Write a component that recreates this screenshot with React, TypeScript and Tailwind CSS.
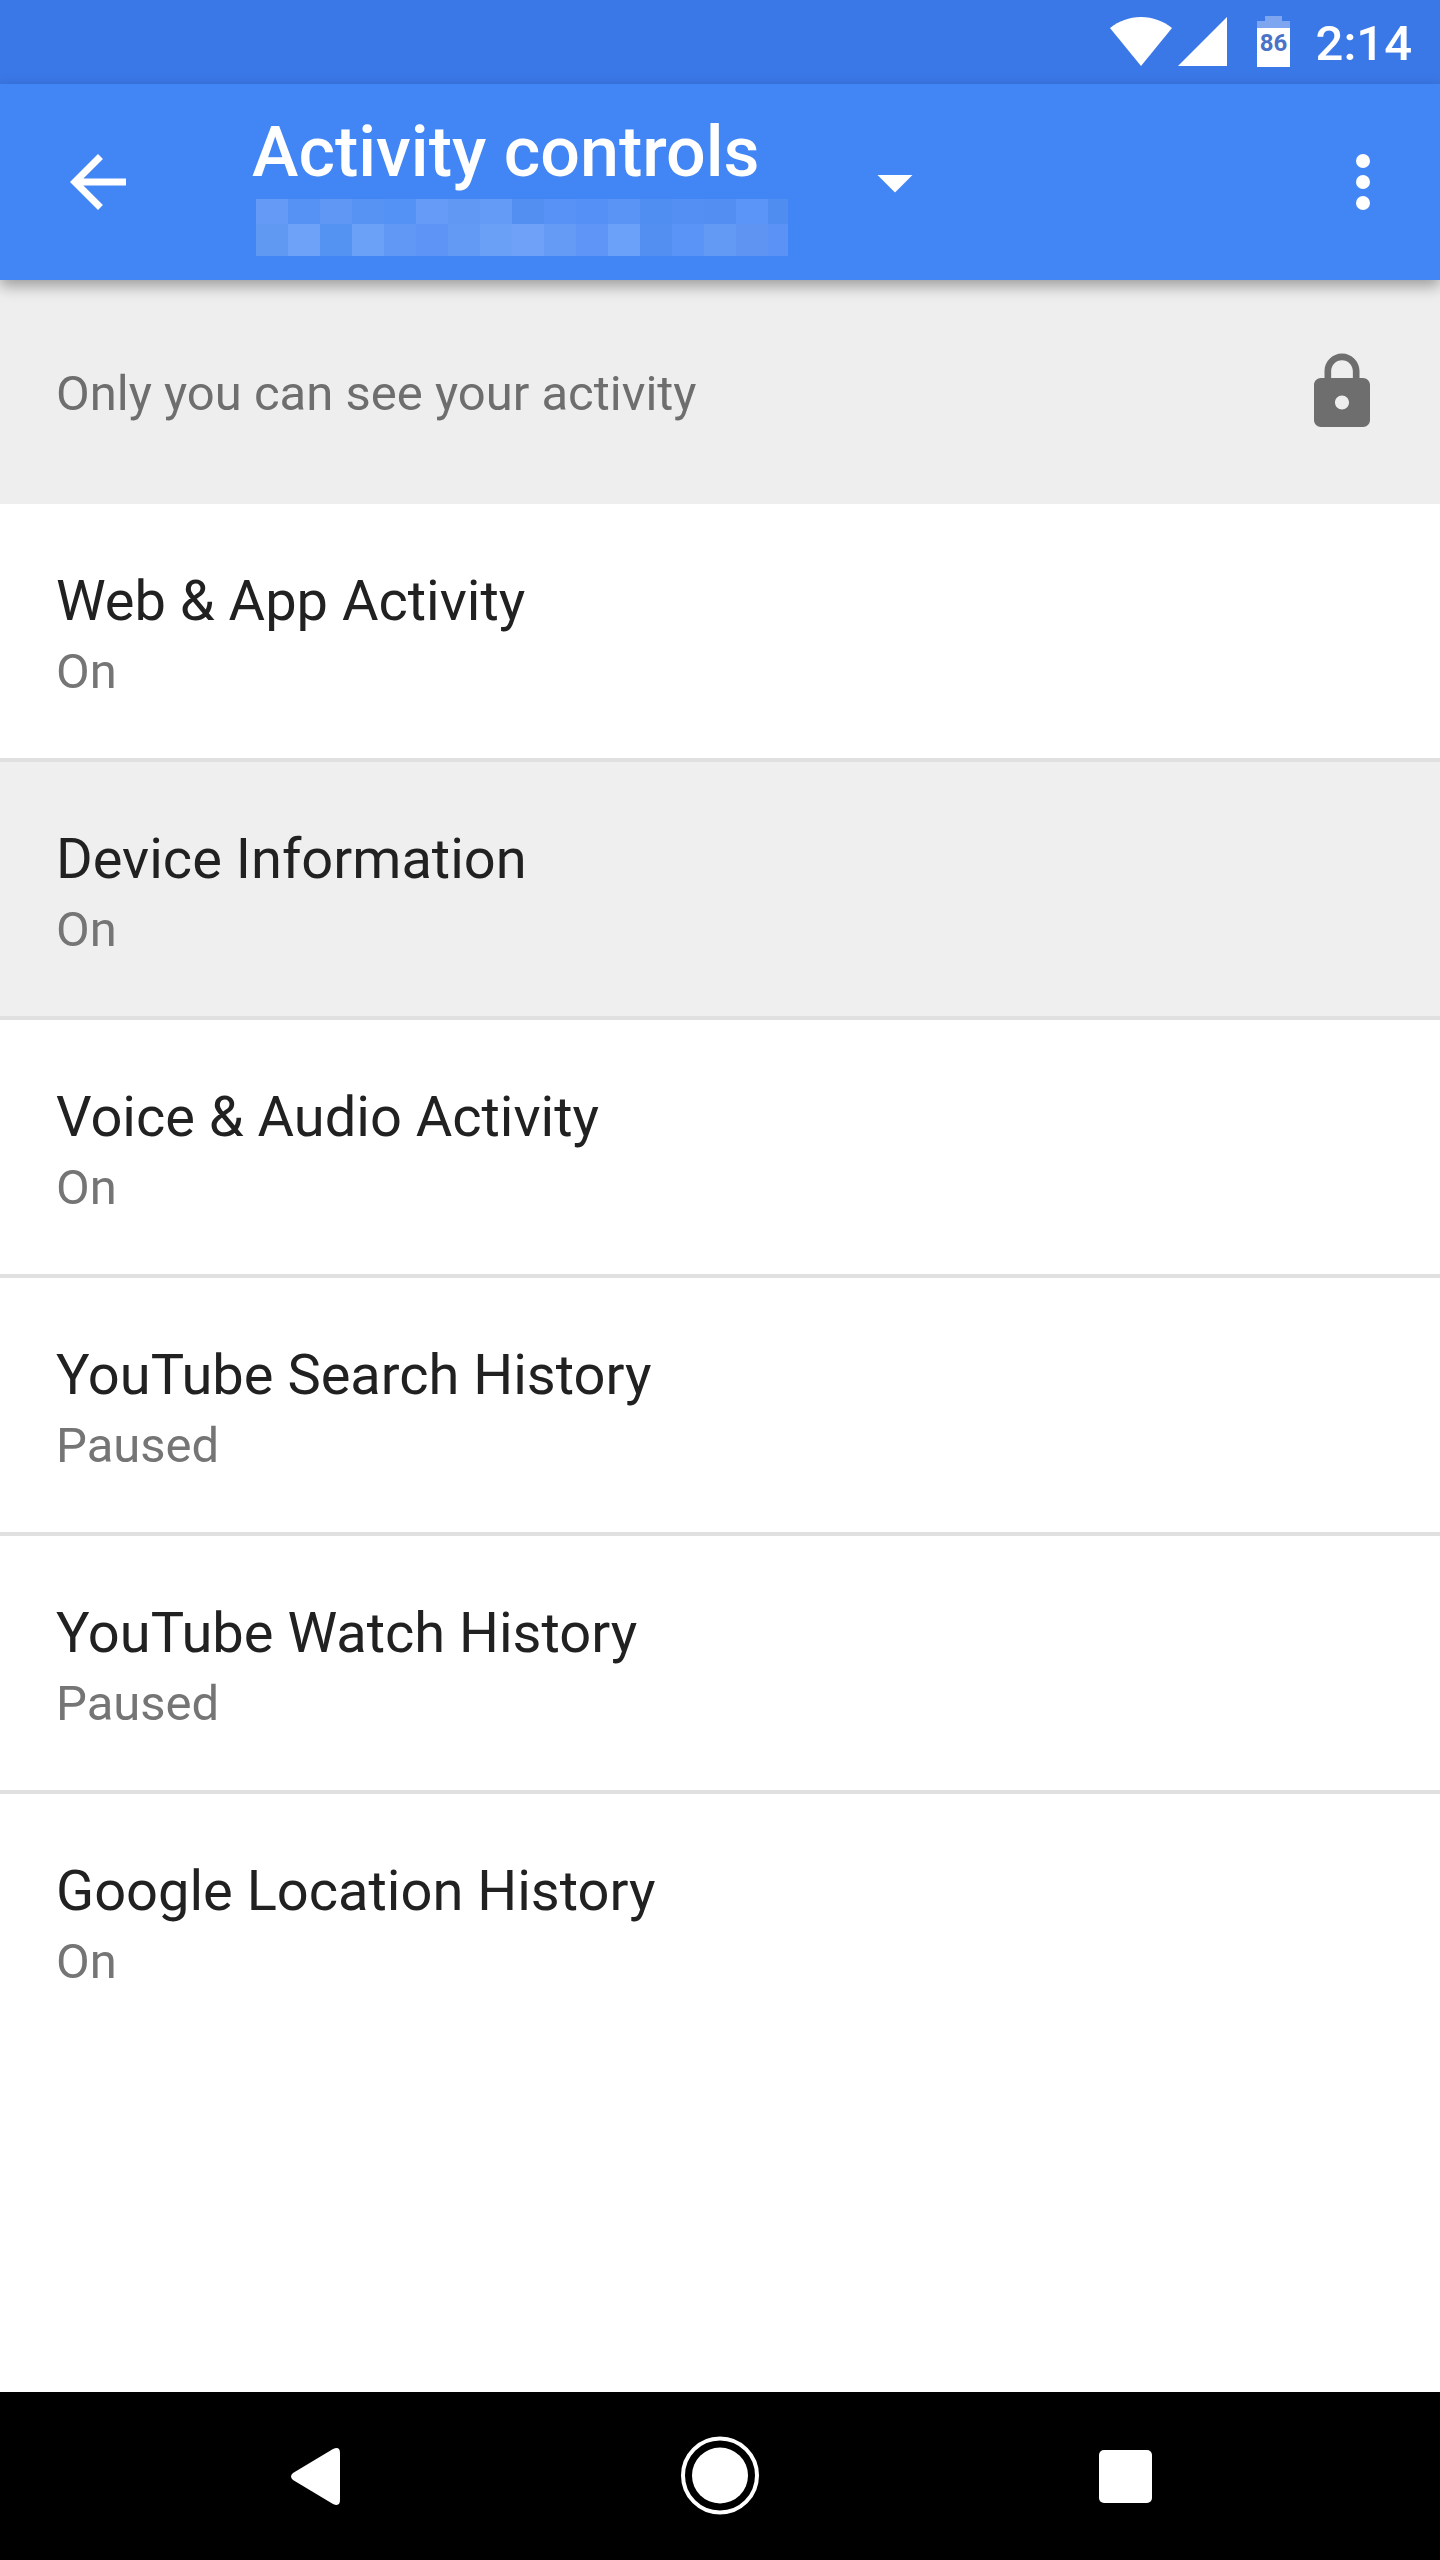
interface ActivityControl {
  name: string;
  status: 'On' | 'Paused';
  pressed?: boolean;
}

const CONTROLS: ActivityControl[] = [
  { name: 'Web & App Activity', status: 'On' },
  { name: 'Device Information', status: 'On', pressed: true },
  { name: 'Voice & Audio Activity', status: 'On' },
  { name: 'YouTube Search History', status: 'Paused' },
  { name: 'YouTube Watch History', status: 'Paused' },
  { name: 'Google Location History', status: 'On' },
];

// Blurred-out account name, one colour per block.
const MASK_TOP = [
  '#659bf6', '#5592f3', '#6097f5', '#5793f3', '#5592f5', '#669bf7', '#6098f4', '#649bf6', '#528ff1',
  '#5892f7', '#5490f6', '#5a94f5', '#508ef2', '#548ff3', '#538ff2', '#5c95f8', '#4f8ef0',
];
const MASK_BOTTOM = [
  '#6099f2', '#6da2f8', '#5493f1', '#6ca1f8', '#6197f5', '#5e94f5', '#639bf4', '#6aa0f6', '#6fa1f9',
  '#659bf5', '#5f95f7', '#6ba1f8', '#538ff1', '#5994f6', '#639af3', '#5f94f2', '#5a92f6',
];

function StatusBar() {
  return (
    <div className="flex h-[84px] items-center justify-end bg-[#3b78e7] pr-7 text-white">
      <svg className="h-[50px] w-[62px]" viewBox="0 0 62 50" fill="currentColor" role="img" aria-label="Wi-Fi">
        <path d="M31 49 0 11C9 4 19 0 31 0s22 4 31 11z" />
      </svg>
      <svg className="ml-1.5 h-[50px] w-[49px]" viewBox="0 0 49 50" fill="currentColor" role="img" aria-label="Signal">
        <path d="M49 0v49H0z" />
      </svg>
      <svg className="ml-[30px] h-[52px] w-[33px]" viewBox="0 0 33 52" role="img" aria-label="Battery 86%">
        <path d="M8 0h17v5h8v7H0V5h8z" fill="#7ea6f0" />
        <path d="M0 12h33v39H0z" fill="currentColor" />
        <text x="16.5" y="35" textAnchor="middle" className="fill-[#4a72c8] text-[24px] font-bold">
          86
        </text>
      </svg>
      <time className="ml-[26px] pt-1 text-[49px] leading-[58px] font-medium">2:14</time>
    </div>
  );
}

function AccountMask() {
  return (
    <span className="mt-1.5 ml-1 block w-[532px]" role="img" aria-label="Hidden account">
      <span className="flex h-[25px]">
        {MASK_TOP.map((color, i) => (
          <span key={i} className="w-8 shrink-0 last:w-5" style={{ backgroundColor: color }} />
        ))}
      </span>
      <span className="flex h-8">
        {MASK_BOTTOM.map((color, i) => (
          <span key={i} className="w-8 shrink-0 last:w-5" style={{ backgroundColor: color }} />
        ))}
      </span>
    </span>
  );
}

function AppBar() {
  return (
    <header className="relative flex h-[196px] items-center bg-[#4285f4] pr-[35px] pl-14 text-white shadow-[0_6px_14px_rgba(0,0,0,0.35)]">
      <button type="button" aria-label="Back">
        <svg className="size-[84px]" viewBox="0 0 24 24" fill="currentColor">
          <path d="M20 11H7.83l5.59-5.59L12 4l-8 8 8 8 1.41-1.41L7.83 13H20v-2z" />
        </svg>
      </button>
      <button type="button" className="ml-28 flex items-center gap-[65px] text-left">
        <span className="pt-[3px]">
          <span className="block text-[70px] leading-[82px] font-medium">Activity controls</span>
          <AccountMask />
        </span>
        <svg className="size-[84px]" viewBox="0 0 24 24" fill="currentColor" aria-hidden="true">
          <path d="M7 10l5 5 5-5z" />
        </svg>
      </button>
      <button type="button" className="ml-auto" aria-label="More options">
        <svg className="size-[84px]" viewBox="0 0 24 24" fill="currentColor">
          <circle cx="12" cy="6" r="2" />
          <circle cx="12" cy="12" r="2" />
          <circle cx="12" cy="18" r="2" />
        </svg>
      </button>
    </header>
  );
}

function PrivacyNote() {
  return (
    <div className="flex h-[224px] items-center justify-between bg-[#eeeeee] px-14">
      <p className="pt-1 text-[49px] leading-[58px] text-[#6e6e6e]">Only you can see your activity</p>
      <svg className="size-[84px] text-[#6e6e6e]" viewBox="0 0 24 24" fill="currentColor" aria-hidden="true">
        <path d="M18 8h-1V6c0-2.76-2.24-5-5-5S7 3.24 7 6v2H6c-1.1 0-2 .9-2 2v10c0 1.1.9 2 2 2h12c1.1 0 2-.9 2-2V10c0-1.1-.9-2-2-2zm-6 9c-1.1 0-2-.9-2-2s.9-2 2-2 2 .9 2 2-.9 2-2 2zm3.100-9H8.9V6c0-1.71 1.39-3.1 3.1-3.1 1.71 0 3.1 1.39 3.1 3.1v2z" />
      </svg>
    </div>
  );
}

function ControlRow({ control }: { control: ActivityControl }) {
  return (
    <li className="border-b-4 border-[#e0e0e0] last:border-b-0">
      <button
        type="button"
        className={`block w-full px-14 pt-16 pb-[57px] text-left ${control.pressed ? 'bg-[#efefef]' : 'bg-white'}`}
      >
        <span className="block text-[56px] leading-[66px] text-[#212121]">{control.name}</span>
        <span className="mt-[9px] block text-[49px] leading-[58px] text-[#757575]">{control.status}</span>
      </button>
    </li>
  );
}

function NavigationBar() {
  return (
    <nav className="flex h-[168px] items-center justify-center gap-[294px] bg-black text-white">
      <button type="button" aria-label="Back">
        <svg className="size-[112px]" viewBox="0 0 112 112" fill="currentColor">
          <path d="M35 53 75 29Q82 26 82 33V80Q82 87 75 84L35 60Q31 56.500 35 53z" />
        </svg>
      </button>
      <button type="button" aria-label="Home">
        <svg className="size-[112px]" viewBox="0 0 112 112" fill="none">
          <circle cx="56" cy="55.5" r="37" stroke="currentColor" strokeWidth="4" />
          <circle cx="56" cy="55.5" r="28" fill="currentColor" />
        </svg>
      </button>
      <button type="button" aria-label="Recent apps">
        <svg className="size-[112px]" viewBox="0 0 112 112" fill="currentColor">
          <rect x="29" y="30" width="53" height="53" rx="5" />
        </svg>
      </button>
    </nav>
  );
}

export default function App() {
  return (
    <div className="flex min-h-screen flex-col bg-white font-[Roboto,sans-serif]">
      <StatusBar />
      <AppBar />
      <main className="grow">
        <PrivacyNote />
        <ul>
          {CONTROLS.map((control) => (
            <ControlRow key={control.name} control={control} />
          ))}
        </ul>
      </main>
      <NavigationBar />
    </div>
  );
}
